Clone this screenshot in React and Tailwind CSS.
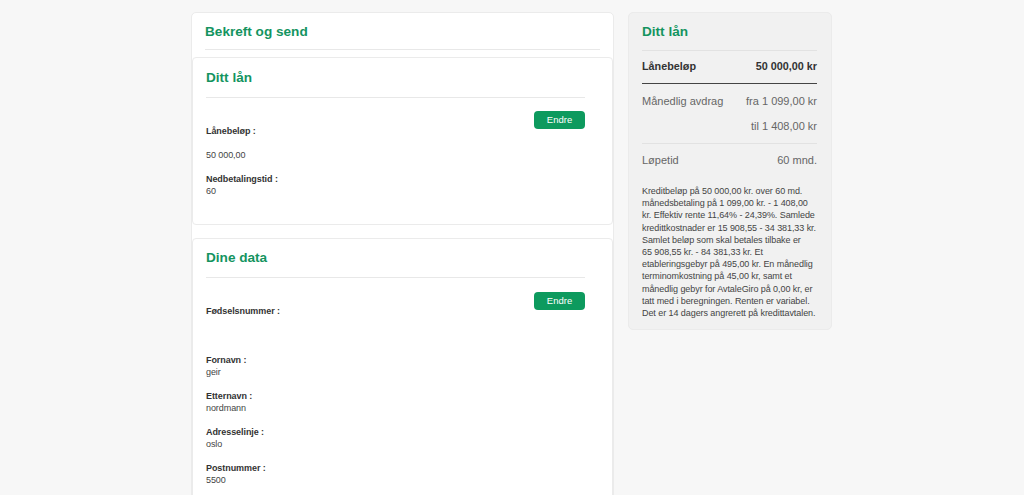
const Field = ({ label, value, className = "" }) => (
  <div className={className}>
    <div className="font-bold text-[#333] leading-[12px]">{label}</div>
    <div className="leading-[12px] text-[#444]">{value}</div>
  </div>
);

const Endre = () => (
  <button className="w-[51px] h-[18px] rounded-[4px] bg-[#0d9a5e] text-white text-[9.5px] leading-[16px] font-normal tracking-normal">Endre</button>
);

const Row = ({ left, right, className = "" }) => (
  <div className={`flex justify-between ${className}`}>
    <span>{left}</span>
    <span>{right}</span>
  </div>
);

export default function App() {
  return (
    <div className="h-[495px] overflow-hidden bg-[#f7f7f7] font-['Liberation_Sans',Arial,sans-serif] text-[9px] tracking-[-0.07px] text-[#444] flex justify-center gap-[14px] pt-[11.5px] pr-[1px]">
      <div className="w-[423px] shrink-0 bg-white rounded-[5px] border border-[#ebebeb] h-[600px]">
        <div className="mx-[13px] h-[37px] border-b border-[#e8e8e8] pt-[11px]">
          <h1 className="text-[13.6px] tracking-normal leading-[16px] font-bold text-[#14945f]">Bekreft og send</h1>
        </div>
        <section className="mt-[7px] h-[168px] rounded-[4px] border border-[#ebebeb] pl-[13px] pr-[27px] pt-[12px]">
          <h2 className="text-[13.6px] tracking-normal leading-[16px] font-bold text-[#14945f]">Ditt lån</h2>
          <div className="mt-[11px] border-b border-[#e8e8e8]"></div>
          <div className="flex justify-between mt-[13px]">
            <div className="pt-[14px]">
              <div className="font-bold text-[#333] leading-[12px]">Lånebeløp :</div>
              <div className="mt-[12px] leading-[12px]">50 000,00</div>
              <Field className="mt-[12px]" label="Nedbetalingstid :" value="60" />
            </div>
            <Endre />
          </div>
        </section>
        <section className="mt-[13px] rounded-[4px] border border-[#ebebeb] pl-[13px] pr-[27px] pt-[11px] h-[300px]">
          <h2 className="text-[13.6px] tracking-normal leading-[16px] font-bold text-[#14945f]">Dine data</h2>
          <div className="mt-[11px] border-b border-[#e8e8e8]"></div>
          <div className="flex justify-between mt-[14px]">
            <div className="pt-[13px]">
              <div className="font-bold text-[#333] leading-[12px]">Fødselsnummer :</div>
              <Field className="mt-[37px]" label="Fornavn :" value="geir" />
              <Field className="mt-[12px]" label="Etternavn :" value="nordmann" />
              <Field className="mt-[12px]" label="Adresselinje :" value="oslo" />
              <Field className="mt-[12px]" label="Postnummer :" value="5500" />
            </div>
            <Endre />
          </div>
        </section>
      </div>
      <aside className="w-[204px] shrink-0 h-[318px] rounded-[5px] bg-[#f1f1f1] border border-[#ebebeb] pl-[13px] pr-[14px] pt-[11px]">
        <h2 className="text-[13.6px] tracking-normal leading-[16px] font-bold text-[#14945f] pb-[10px] border-b border-[#e2e2e2]">Ditt lån</h2>
        <Row className="font-bold text-[#333] text-[10.8px] tracking-normal h-[33px] items-center border-b border-[#444]" left="Lånebeløp" right="50 000,00 kr" />
        <Row className="text-[#666] text-[11px] tracking-normal mt-[11px] leading-[13px]" left="Månedlig avdrag" right="fra 1 099,00 kr" />
        <div className="text-[#666] text-[11px] tracking-normal text-right mt-[12px] leading-[13px] pb-[10px] border-b border-[#e2e2e2]">til 1 408,00 kr</div>
        <Row className="text-[#666] text-[11px] tracking-normal mt-[10px] leading-[13px]" left="Løpetid" right="60 mnd." />
        <p className="mt-[18.5px] leading-[12.2px] text-[#444] whitespace-nowrap">
          Kreditbeløp på 50 000,00 kr. over 60 md.<br />
          månedsbetaling på 1 099,00 kr. - 1 408,00<br />
          kr. Effektiv rente 11,64% - 24,39%. Samlede<br />
          kredittkostnader er 15 908,55 - 34 381,33 kr.<br />
          Samlet beløp som skal betales tilbake er<br />
          65 908,55 kr. - 84 381,33 kr. Et<br />
          etableringsgebyr på 495,00 kr. En månedlig<br />
          terminomkostning på 45,00 kr, samt et<br />
          månedlig gebyr for AvtaleGiro på 0,00 kr, er<br />
          tatt med i beregningen. Renten er variabel.<br />
          Det er 14 dagers angrerett på kredittavtalen.
        </p>
      </aside>
    </div>
  );
}
